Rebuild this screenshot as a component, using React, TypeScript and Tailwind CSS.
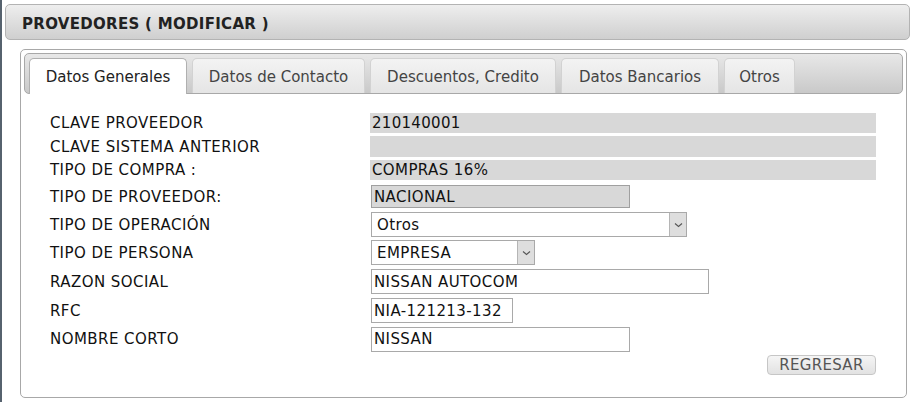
import React from "react";

const TABS = [
  { label: "Datos Generales", width: "w-[158px]" },
  { label: "Datos de Contacto", width: "w-[173px]" },
  { label: "Descuentos, Credito", width: "w-[186px]" },
  { label: "Datos Bancarios", width: "w-[158px]" },
  { label: "Otros", width: "w-[71px]" },
];

function Chevron() {
  return (
    <svg width="9" height="6" viewBox="0 0 9 6" fill="none">
      <path d="M1 1.5 L4.5 4.5 L8 1.5" stroke="#555" strokeWidth="1.1" />
    </svg>
  );
}

function FakeSelect({ value, width }: { value: string; width: string }) {
  return (
    <div className={`${width} h-[25px] flex border border-[#a9a9a9] bg-white`}>
      <div className="flex-1 flex items-center pl-[5px] pt-px text-[#111] tracking-[0.4px]">{value}</div>
      <div className="w-[17px] flex items-center justify-center bg-[#dedede] border-l border-[#b5b5b5]">
        <Chevron />
      </div>
    </div>
  );
}

function TextBox({ value, width }: { value: string; width: string }) {
  return (
    <div
      className={`${width} h-[25px] flex items-center pl-[2px] pt-px border border-[#a9a9a9] bg-white text-[#111] tracking-[0.4px]`}
    >
      {value}
    </div>
  );
}

function Row({
  label,
  height,
  top,
  children,
}: {
  label: string;
  height: string;
  top: string;
  children?: React.ReactNode;
}) {
  return (
    <div className={`flex items-center ${height} ${top}`}>
      <div className="w-[320px] pt-px text-[#111] tracking-[0.45px]">{label}</div>
      <div className="flex-1 h-full flex items-center">{children}</div>
    </div>
  );
}

export default function App() {
  return (
    <div className="w-[913px] h-[402px] bg-white border-l-2 border-[#56626e] font-['DejaVu_Sans',Verdana,sans-serif] text-[15px] overflow-hidden">
      <div className="ml-[3px] mr-[3px] mt-[4px] h-[36px] rounded-[5px] border border-[#b3b3b3] bg-gradient-to-b from-[#eeeeee] to-[#cfcfcf] flex items-center pl-[16px] pt-[4px] font-bold text-[15px] text-[#222] tracking-[0.3px]">
        PROVEDORES ( MODIFICAR )
      </div>

      <div className="ml-[18px] mr-[6px] mt-[9px] h-[349px] rounded-[5px] border border-[#a8a8a8] p-[3px]">
        <div className="h-[41px] rounded-[5px] border border-[#a8a8a8] bg-gradient-to-b from-[#e8e8e8] to-[#c9c9c9] flex items-end gap-[5px] pl-[4px]">
          {TABS.map((t, i) => (
            <div
              key={t.label}
              className={
                i === 0
                  ? `${t.width} h-[36px] -mb-px rounded-t-[5px] border border-b-0 border-[#b0b0b0] bg-white flex items-center justify-center pt-[2px] text-[#222]`
                  : `${t.width} h-[35px] rounded-t-[5px] border border-b-0 border-[#d2d2d2] bg-gradient-to-b from-[#f3f3f3] to-[#e5e5e5] flex items-center justify-center pt-[2px] text-[#444]`
              }
            >
              {t.label}
            </div>
          ))}
        </div>

        <div className="ml-[26px] w-[826px] mt-[19px]">
          <Row label="CLAVE PROVEEDOR" height="h-[20px]" top="mt-0">
            <div className="w-[506px] h-full bg-[#d8d8d8] flex items-center pl-[2px] pt-px text-[#111] tracking-[0.3px]">
              210140001
            </div>
          </Row>
          <Row label="CLAVE SISTEMA ANTERIOR" height="h-[21px]" top="mt-[3px]">
            <div className="w-[506px] h-full bg-[#d8d8d8]" />
          </Row>
          <Row label="TIPO DE COMPRA :" height="h-[20px]" top="mt-[3px]">
            <div className="w-[506px] h-full bg-[#d8d8d8] flex items-center pl-[2px] pt-px text-[#111] tracking-[0.4px]">
              COMPRAS 16%
            </div>
          </Row>
          <Row label="TIPO DE PROVEEDOR:" height="h-[23px]" top="mt-[5px]">
            <div className="w-[259px] h-full ml-px border border-[#a0a0a0] bg-[#d8d8d8] flex items-center pl-[2px] pt-px text-[#111] tracking-[0.4px]">
              NACIONAL
            </div>
          </Row>
          <Row label="TIPO DE OPERACIÓN" height="h-[25px]" top="mt-[4px]">
            <div className="ml-px">
              <FakeSelect value="Otros" width="w-[316px]" />
            </div>
          </Row>
          <Row label="TIPO DE PERSONA" height="h-[25px]" top="mt-[3px]">
            <div className="ml-px">
              <FakeSelect value="EMPRESA" width="w-[164px]" />
            </div>
          </Row>
          <Row label="RAZON SOCIAL" height="h-[25px]" top="mt-[4px]">
            <div className="ml-px">
              <TextBox value="NISSAN AUTOCOM" width="w-[338px]" />
            </div>
          </Row>
          <Row label="RFC" height="h-[25px]" top="mt-[4px]">
            <div className="ml-px">
              <TextBox value="NIA-121213-132" width="w-[142px]" />
            </div>
          </Row>
          <Row label="NOMBRE CORTO" height="h-[24px]" top="mt-[4px]">
            <div className="ml-px">
              <TextBox value="NISSAN" width="w-[259px]" />
            </div>
          </Row>
          <div className="flex justify-end mt-[4px]">
            <button
              type="button"
              className="w-[109px] h-[20px] rounded-[4px] border border-[#c6c6c6] bg-gradient-to-b from-[#f5f5f5] to-[#e2e2e2] text-[#555] text-[15px] leading-none tracking-[0.3px] flex items-center justify-center pt-px"
            >
              REGRESAR
            </button>
          </div>
        </div>
      </div>
    </div>
  );
}
